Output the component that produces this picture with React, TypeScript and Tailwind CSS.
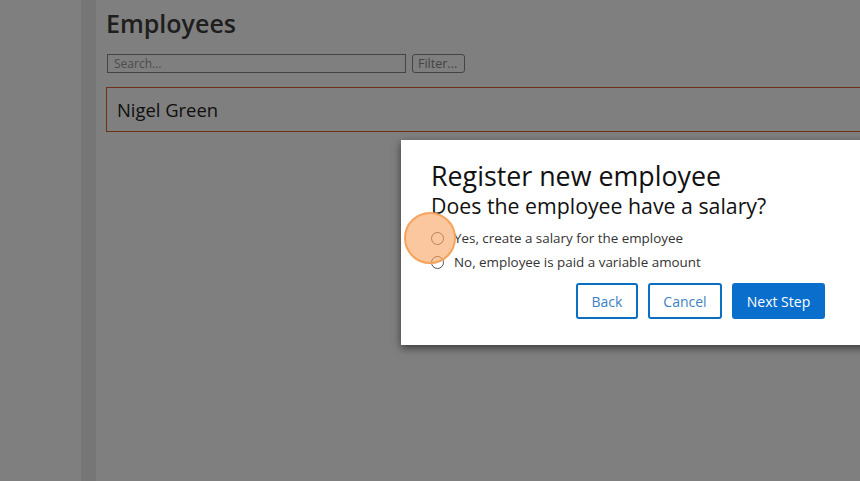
import React from "react";

export default function App() {
  return (
    <div
      className="relative w-[860px] h-[481px] overflow-hidden bg-white flex"
      style={{ fontFamily: '"Open Sans", "Noto Sans", sans-serif' }}
    >
      <div className="w-[81px] shrink-0 bg-[#fefefe]" />
      <div className="w-[15px] shrink-0 bg-[#ececec]" />
      <div className="flex-1 flex flex-col pl-[10px]">
        <h1 className="text-[25px] leading-[32px] font-semibold text-[#3c3c3c] mt-[7px]">
          Employees
        </h1>
        <div className="flex items-center gap-[6px] mt-[15px] pl-px">
          <div className="w-[299px] h-[19px] border border-[#888] text-[12px] leading-[17px] text-[#999] pl-[6px]">
            Search...
          </div>
          <div className="h-[19px] w-[53px] px-[5px] border border-[#888] rounded-[3px] text-[12.5px] leading-[17px] text-[#888]">
            Filter...
          </div>
        </div>
        <div className="mt-[14px] h-[45px] border border-[#d9622e] border-r-0 flex items-center pl-[10px] text-[18.4px] text-[#222]">
          Nigel Green
        </div>
      </div>

      <div className="absolute inset-0 bg-black/50" />

      <div className="absolute left-[401px] top-[140px] w-[520px] h-[205px] bg-white shadow-[0_3px_8px_rgba(0,0,0,0.55)] pl-[30px] pt-[20px]">
        <div className="text-[26.8px] leading-[32px] font-normal text-[#111]">
          Register new employee
        </div>
        <div className="text-[21.3px] leading-[26px] font-normal text-[#111] mt-[1px]">
          Does the employee have a salary?
        </div>
        <div className="flex flex-col gap-[6px] mt-[10px]">
          <label className="flex items-center gap-[10px] text-[13.4px] leading-[18px] text-[#333]">
            <span className="w-[13px] h-[13px] rounded-full border border-[#555] bg-white" />
            Yes, create a salary for the employee
          </label>
          <label className="flex items-center gap-[10px] text-[13.4px] leading-[18px] text-[#333]">
            <span className="w-[13px] h-[13px] rounded-full border border-[#555] bg-white" />
            No, employee is paid a variable amount
          </label>
        </div>
        <div className="flex gap-[10px] mt-[12px] pl-[145px]">
          <button className="w-[62px] h-[36px] border-2 border-[#0a6fc2] rounded-[3px] text-[14px] text-[#3b82c4] bg-white">
            Back
          </button>
          <button className="w-[74px] h-[36px] border-2 border-[#0a6fc2] rounded-[3px] text-[14px] text-[#3b82c4] bg-white">
            Cancel
          </button>
          <button className="w-[93px] h-[36px] rounded-[3px] text-[14px] text-white bg-[#0a6fcc]">
            Next Step
          </button>
        </div>
      </div>

      <div className="absolute left-[404px] top-[212px] w-[52px] h-[52px] rounded-full bg-[#f7a25f]/60 border-2 border-[#f6a35c]" />
    </div>
  );
}
